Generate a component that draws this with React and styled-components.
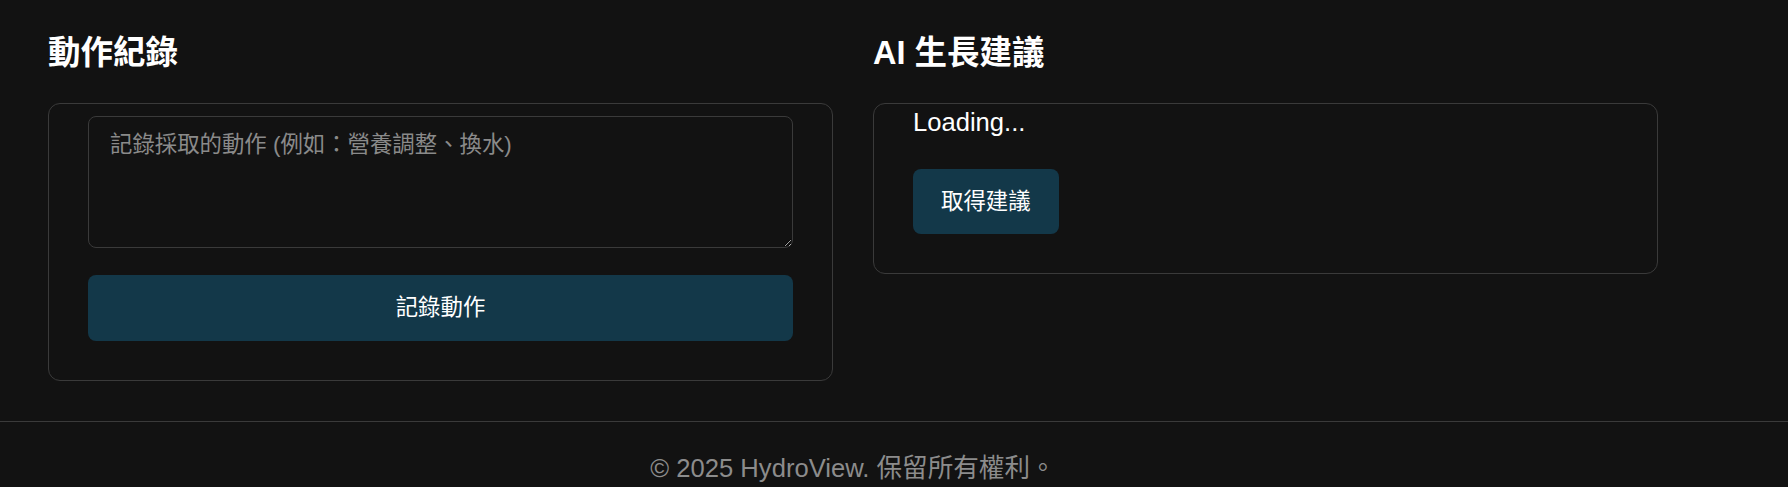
import React, { useState } from 'react'
import styled, { createGlobalStyle } from 'styled-components'

const GlobalStyle = createGlobalStyle`
  html, body {
    margin: 0;
    padding: 0;
    background: #121212;
    color: #ffffff;
    font-family: 'Liberation Sans', Arial, 'Noto Sans CJK TC', sans-serif;
  }
  * {
    box-sizing: border-box;
  }
`

const Page = styled.div`
  min-height: 100vh;
  background: #121212;
`

const Main = styled.main`
  width: 1610px;
  margin-left: 48px;
  padding-top: 34px;
  display: grid;
  grid-template-columns: 1fr 1fr;
  column-gap: 40px;
  align-items: start;
`

const Section = styled.section`
  display: flex;
  flex-direction: column;
  gap: 31px;
`

const Heading = styled.h2`
  margin: 0;
  font-size: 32.5px;
  line-height: 38px;
  font-weight: 700;
  color: #ffffff;
`

const Card = styled.div`
  display: flex;
  flex-direction: column;
  align-items: ${(p) => (p.$stretch ? 'stretch' : 'flex-start')};
  border: 1px solid #3a3a3a;
  border-radius: 12px;
  padding: 0 39px 39px;
`

const TextArea = styled.textarea`
  display: block;
  width: 100%;
  height: 132px;
  margin: 12px 0 0;
  padding: 12px 21px;
  background: #121212;
  color: #ffffff;
  border: 1px solid #3a3a3a;
  border-radius: 8px;
  font-family: inherit;
  font-size: 22.4px;
  line-height: 32px;
  resize: vertical;
  outline: none;

  &::placeholder {
    color: #8a8a8a;
  }
`

const Button = styled.button`
  display: block;
  width: ${(p) => (p.$full ? '100%' : 'auto')};
  height: ${(p) => (p.$full ? '66px' : '65px')};
  margin-top: ${(p) => (p.$full ? '27px' : '29px')};
  padding: 0 28px;
  background: #133849;
  color: #ffffff;
  border: none;
  border-radius: 8px;
  font-family: inherit;
  font-size: 22.4px;
  line-height: 32px;
  cursor: pointer;
`

const Status = styled.p`
  margin: 0;
  font-size: 25.6px;
  line-height: 36px;
  color: #ffffff;
`

const Footer = styled.footer`
  margin-top: 40px;
  border-top: 1px solid #3a3a3a;
  padding-top: 27px;
`

const FooterText = styled.p`
  width: 1610px;
  margin: 0 0 0 48px;
  text-align: center;
  font-size: 25.6px;
  line-height: 38px;
  color: #8c8c8c;
`

const App = () => {
  const [note, setNote] = useState('')

  return (
    <Page>
      <GlobalStyle />
      <Main>
        <Section>
          <Heading>動作紀錄</Heading>
          <Card $stretch>
            <TextArea
              value={note}
              onChange={(e) => setNote(e.target.value)}
              placeholder="記錄採取的動作 (例如：營養調整、換水)"
            />
            <Button $full>記錄動作</Button>
          </Card>
        </Section>

        <Section>
          <Heading>AI 生長建議</Heading>
          <Card>
            <Status>Loading...</Status>
            <Button>取得建議</Button>
          </Card>
        </Section>
      </Main>

      <Footer>
        <FooterText>© 2025 HydroView. 保留所有權利。</FooterText>
      </Footer>
    </Page>
  )
}

export default App
